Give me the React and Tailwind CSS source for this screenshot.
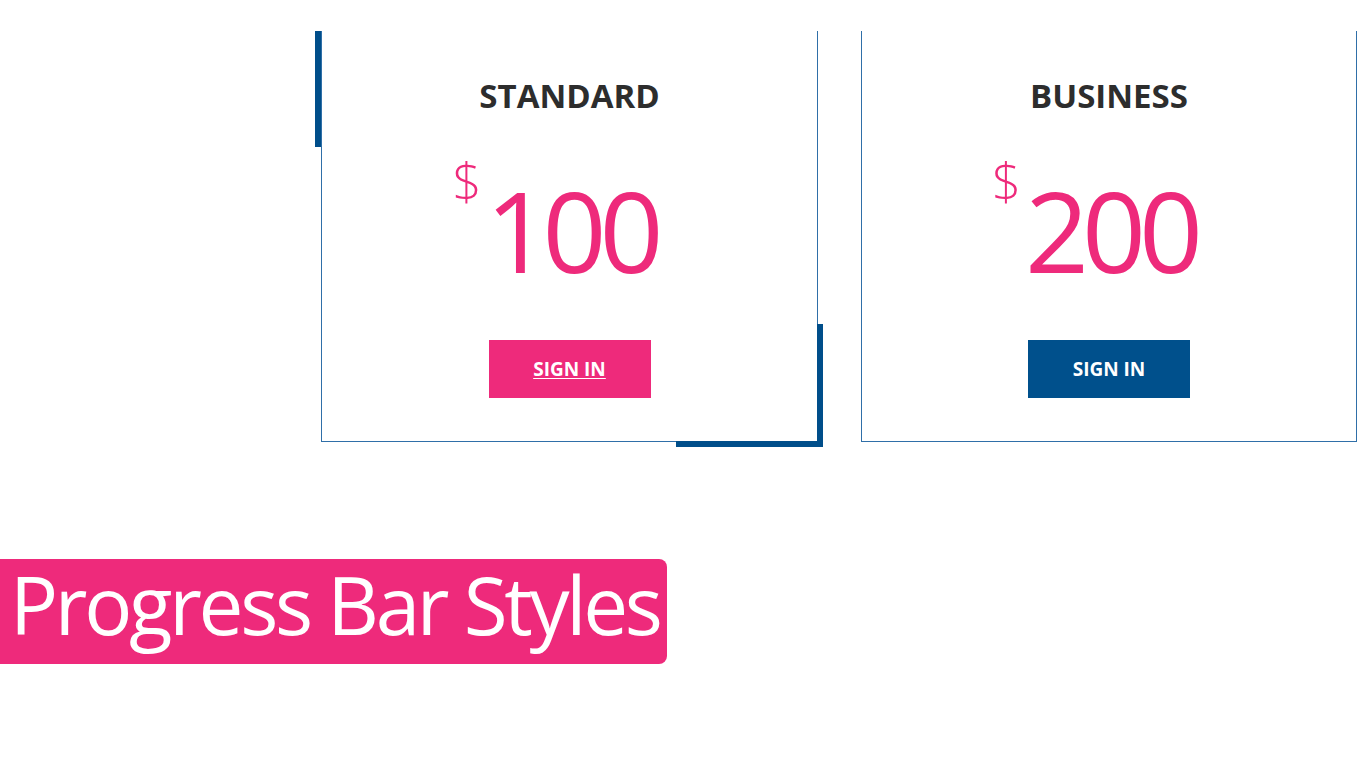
import React from 'react';

const plans = [
  { name: 'STANDARD', price: '100', accent: true },
  { name: 'BUSINESS', price: '200', accent: false },
];

const PlanCard = ({ plan }) => {
  return (
    <div className="relative h-[411px] border-x border-b border-[#2f6fa8] bg-white">
      {plan.accent && (
        <>
          <div className="absolute left-[-7px] top-0 h-[116px] w-[6px] bg-[#004e8a]" />
          <div className="absolute bottom-[-6px] right-[-6px] h-[123px] w-[6px] bg-[#004e8a]" />
          <div className="absolute bottom-[-6px] right-[-6px] h-[6px] w-[147px] bg-[#004e8a]" />
        </>
      )}
      <div className="flex flex-col items-center pt-[45px]">
        <h3 className="text-[33px] font-bold leading-[40px] text-[#2d2d2d]">{plan.name}</h3>
        <div className="mt-[58px] flex items-start pr-[30px] text-[#ee2a7b]">
          <span className="mr-[4px] mt-[-19px] text-[51px] font-light leading-none">$</span>
          <span className="text-[112px] font-normal leading-none tracking-[-7px]">{plan.price}</span>
        </div>
        <button
          className={`mt-[54px] h-[58px] w-[162px] text-[19px] font-bold text-white ${
            plan.accent ? 'bg-[#ee2a7b] underline underline-offset-2' : 'bg-[#00508c]'
          }`}
        >
          SIGN IN
        </button>
      </div>
    </div>
  );
};

export default function App() {
  return (
    <div
      className="h-[768px] w-[1366px] overflow-hidden bg-white"
      style={{ fontFamily: '"Open Sans", "Noto Sans", sans-serif' }}
    >
      <div className="ml-[321px] mt-[31px] flex gap-[43px]">
        <div className="w-[497px]">
          <PlanCard plan={plans[0]} />
        </div>
        <div className="w-[496px]">
          <PlanCard plan={plans[1]} />
        </div>
      </div>
      <div className="mt-[117px] flex h-[105px] w-[667px] items-start rounded-r-lg bg-[#ee2a7b] pl-[10px] pt-[5px]">
        <span className="whitespace-nowrap text-[80px] leading-none tracking-[-3.3px] text-white">
          Progress Bar Styles
        </span>
      </div>
    </div>
  );
}
